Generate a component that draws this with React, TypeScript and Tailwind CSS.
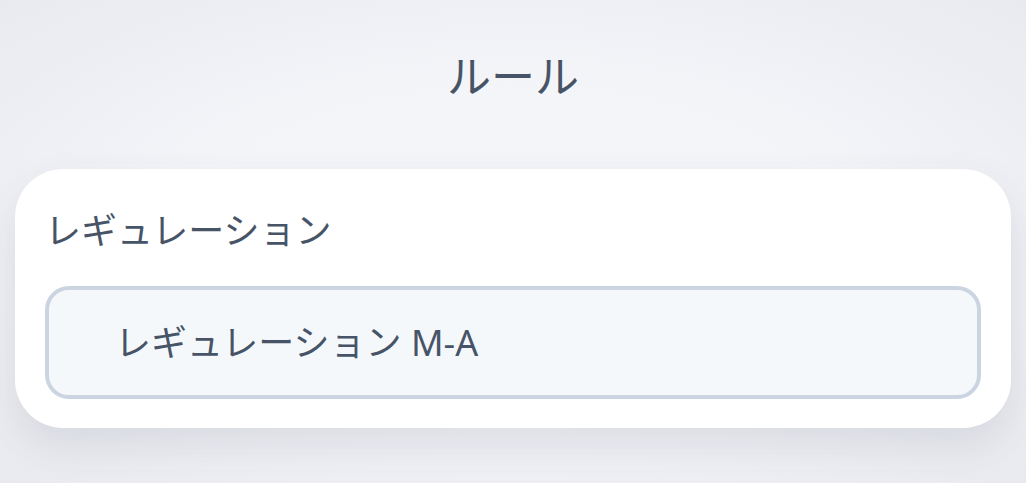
export default function App() {
  return (
    <div
      className="min-h-[483px] w-full bg-[radial-gradient(ellipse_at_center,#f4f5f9_45%,#e9eaef_100%)] text-[#475467] px-[15px] pt-[44px] pb-[55px]"
      style={{ fontFamily: '"Noto Sans", "Noto Sans CJK JP", sans-serif' }}
    >
      <h1 className="text-center text-[44px] leading-[64px] font-normal">ルール</h1>
      <div className="mt-[61px] rounded-[48px] bg-white px-[30px] pt-[36px] pb-[29px] shadow-[0_18px_40px_rgba(60,65,90,0.12)]">
        <div className="text-[36px] leading-[52px]">レギュレーション</div>
        <div className="mt-[29px] flex h-[113px] items-center rounded-[24px] border-[4px] border-[#cbd5e1] bg-[#f5f8fb] pl-[66px] text-[36px]">
          レギュレーション M-A
        </div>
      </div>
    </div>
  );
}
